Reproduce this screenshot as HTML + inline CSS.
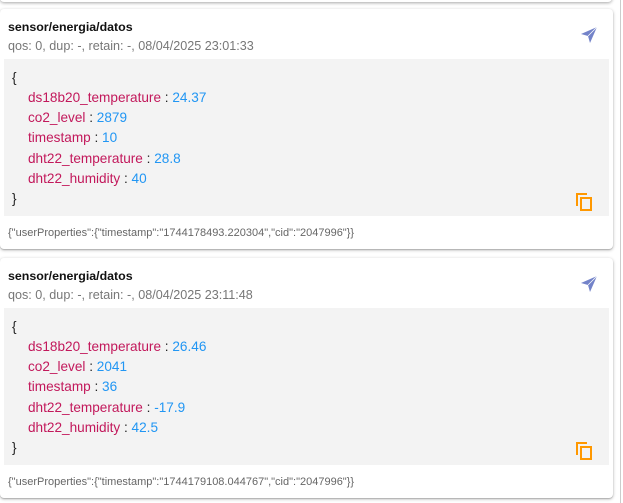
<!DOCTYPE html>
<html><head><style>
body{margin:0;width:623px;height:503px;background:#fff;font-family:"Liberation Sans",Arial,sans-serif;position:relative;overflow:hidden}
.top{position:absolute;left:0;top:-10px;width:612px;height:12px;border-radius:4px;box-shadow:0 1px 3px rgba(0,0,0,.35);background:#fff}
.sb{position:absolute;left:620px;top:0;width:1px;height:503px;background:#ccc}
.card{position:absolute;left:0;width:613px;height:240px;background:#fff;border-radius:4px;box-shadow:0 1px 3px rgba(0,0,0,.3),0 1px 1px rgba(0,0,0,.14)}
.t{position:absolute;left:8px;top:11px;font-size:12.4px;font-weight:bold;color:#111}
.s{position:absolute;left:8px;top:30px;font-size:12.6px;color:#777}
.box{position:absolute;left:4px;top:50px;width:605px;height:157px;background:#f3f3f3}
.l{position:absolute;font-size:13.6px;line-height:16px;color:#222;margin-top:1px}
.k{color:#c2185b}.v{color:#2196f3}
.f{position:absolute;left:8px;top:218px;font-size:11px;color:#666}
.send{position:absolute;left:580px;top:17px}
.copy{position:absolute;left:575px;top:183px}
</style></head><body>
<div class="top"></div><div class="sb"></div>

<div class="card" style="top:9px">
<div class="t">sensor/energia/datos</div>
<div class="s">qos: 0, dup: -, retain: -, 08/04/2025 23:01:33</div>
<div class="box">
<div class="l" style="left:8px;top:10px">{</div>
<div class="l" style="left:24px;top:30px"><span class="k">ds18b20_temperature</span> : <span class="v">24.37</span></div>
<div class="l" style="left:24px;top:50px"><span class="k">co2_level</span> : <span class="v">2879</span></div>
<div class="l" style="left:24px;top:70px"><span class="k">timestamp</span> : <span class="v">10</span></div>
<div class="l" style="left:24px;top:91px"><span class="k">dht22_temperature</span> : <span class="v">28.8</span></div>
<div class="l" style="left:24px;top:111px"><span class="k">dht22_humidity</span> : <span class="v">40</span></div>
<div class="l" style="left:8px;top:131px">}</div>
</div>
<svg class="send" width="18" height="18" viewBox="0 0 18 18"><path d="M1 8 L17 1 L10 17 L8 10 Z" fill="#7383c9"/><path d="M8 10 L17 1" stroke="#fff" stroke-width="0.8"/></svg>
<svg class="copy" width="18" height="20" viewBox="0 0 18 20"><path d="M2 14V2H12" fill="none" stroke="#ff9800" stroke-width="2"/><rect x="6" y="6" width="10" height="12" fill="none" stroke="#ff9800" stroke-width="2"/></svg>
<div class="f">{"userProperties":{"timestamp":"1744178493.220304","cid":"2047996"}}</div>
</div>

<div class="card" style="top:258px">
<div class="t">sensor/energia/datos</div>
<div class="s">qos: 0, dup: -, retain: -, 08/04/2025 23:11:48</div>
<div class="box">
<div class="l" style="left:8px;top:10px">{</div>
<div class="l" style="left:24px;top:30px"><span class="k">ds18b20_temperature</span> : <span class="v">26.46</span></div>
<div class="l" style="left:24px;top:50px"><span class="k">co2_level</span> : <span class="v">2041</span></div>
<div class="l" style="left:24px;top:70px"><span class="k">timestamp</span> : <span class="v">36</span></div>
<div class="l" style="left:24px;top:91px"><span class="k">dht22_temperature</span> : <span class="v">-17.9</span></div>
<div class="l" style="left:24px;top:111px"><span class="k">dht22_humidity</span> : <span class="v">42.5</span></div>
<div class="l" style="left:8px;top:131px">}</div>
</div>
<svg class="send" width="18" height="18" viewBox="0 0 18 18"><path d="M1 8 L17 1 L10 17 L8 10 Z" fill="#7383c9"/><path d="M8 10 L17 1" stroke="#fff" stroke-width="0.8"/></svg>
<svg class="copy" width="18" height="20" viewBox="0 0 18 20"><path d="M2 14V2H12" fill="none" stroke="#ff9800" stroke-width="2"/><rect x="6" y="6" width="10" height="12" fill="none" stroke="#ff9800" stroke-width="2"/></svg>
<div class="f">{"userProperties":{"timestamp":"1744179108.044767","cid":"2047996"}}</div>
</div>
</body></html>
